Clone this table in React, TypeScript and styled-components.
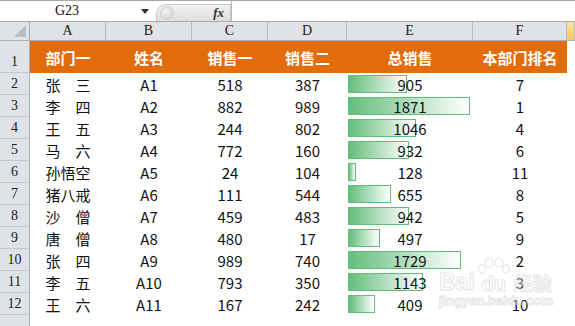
import styled, { createGlobalStyle } from 'styled-components';
import type { JSX } from 'react';

const COLS = '30px 76px 86px 76px 79px 126px 94px 1fr';
const MAX_BAR = 122;

type Rec = { name: string; id: string; s1: number; s2: number; rank: number };

const rows: Rec[] = [
  { name: '张　三', id: 'A1', s1: 518, s2: 387, rank: 7 },
  { name: '李　四', id: 'A2', s1: 882, s2: 989, rank: 1 },
  { name: '王　五', id: 'A3', s1: 244, s2: 802, rank: 4 },
  { name: '马　六', id: 'A4', s1: 772, s2: 160, rank: 6 },
  { name: '孙悟空', id: 'A5', s1: 24, s2: 104, rank: 11 },
  { name: '猪八戒', id: 'A6', s1: 111, s2: 544, rank: 8 },
  { name: '沙　僧', id: 'A7', s1: 459, s2: 483, rank: 5 },
  { name: '唐　僧', id: 'A8', s1: 480, s2: 17, rank: 9 },
  { name: '张　四', id: 'A9', s1: 989, s2: 740, rank: 2 },
  { name: '李　五', id: 'A10', s1: 793, s2: 350, rank: 3 },
  { name: '王　六', id: 'A11', s1: 167, s2: 242, rank: 10 },
];

const maxTotal = Math.max(...rows.map((r) => r.s1 + r.s2));

const GlobalStyle = createGlobalStyle`
  html, body {
    margin: 0;
    background: #fff;
    overflow: hidden;
  }
`;

const Window = styled.div`
  width: 575px;
  height: 326px;
  overflow: hidden;
  position: relative;
  display: flex;
  flex-direction: column;
  background: #fff;
`;

const TopStrip = styled.div`
  height: 3px;
  display: flex;
  border-bottom: 1px solid #a7a7a7;
`;

const StripSeg = styled.div<{ $w: number }>`
  width: ${(p): number => p.$w}px;
  border-right: 1px solid #c4c4c4;
`;

const FormulaBar = styled.div`
  height: 22px;
  display: flex;
  border-bottom: 1px solid #a9a9a9;
`;

const NameBox = styled.div`
  width: 134px;
  display: flex;
  align-items: center;
  justify-content: center;
  font-family: 'Liberation Serif', serif;
  font-size: 14px;
  color: #111;
`;

const DropArrow = styled.div`
  width: 22px;
  display: flex;
  align-items: center;
  justify-content: center;
`;

const FxGroup = styled.div`
  width: 75px;
  margin-top: 3px;
  display: flex;
  align-items: center;
  justify-content: space-between;
  padding: 0 6px 0 3px;
  box-sizing: border-box;
  border: 1px solid #c9c9c9;
  border-bottom: none;
  border-radius: 10px 0 0 0;
  background: linear-gradient(#f1f1f1, #dedede);
`;

const Knob = styled.div`
  width: 12px;
  height: 12px;
  border-radius: 50%;
  background: radial-gradient(circle at 40% 35%, #f4f4f4, #c9c9c9);
  border: 1px solid #d0d0d0;
`;

const Fx = styled.span`
  font-family: 'Liberation Serif', serif;
  font-style: italic;
  font-weight: bold;
  font-size: 13px;
  color: #333;
`;

const FormulaInput = styled.div`
  flex: 1;
  border-left: 1px solid #b9b9b9;
`;

const Gap = styled.div`
  height: 3px;
`;

const Row = styled.div<{ $h: number }>`
  display: grid;
  grid-template-columns: ${COLS};
  height: ${(p): number => p.$h}px;
  flex-shrink: 0;
`;

const Corner = styled.div`
  background: #dfe3e8;
  border-right: 1px solid #a9b0b9;
  border-bottom: 1px solid #a9b0b9;
  display: flex;
  align-items: flex-end;
  justify-content: flex-end;
  padding: 0 3px 3px 0;
`;

const ColHead = styled.div<{ $selected?: boolean }>`
  background: ${(p): string =>
    p.$selected ? 'linear-gradient(#fbe39a, #f7c95a)' : '#dfe3e8'};
  border-right: 1px solid #b5bcc5;
  border-bottom: 1px solid #a9b0b9;
  display: flex;
  align-items: center;
  justify-content: center;
  font-family: 'Liberation Serif', serif;
  font-size: 14px;
  color: #222;
`;

const RowHead = styled.div<{ $bottom?: boolean }>`
  background: #dfe3e8;
  border-right: 1px solid #a9b0b9;
  border-bottom: 1px solid #c3c8cf;
  display: flex;
  align-items: ${(p): string => (p.$bottom ? 'flex-end' : 'center')};
  padding-bottom: ${(p): string => (p.$bottom ? '2px' : '0')};
  justify-content: center;
  font-family: 'Liberation Serif', serif;
  font-size: 14px;
  color: #222;
`;

const HeadCell = styled.div`
  background: #e26b0a;
  color: #fff;
  display: flex;
  align-items: center;
  justify-content: center;
  font-family: 'Noto Sans CJK SC', sans-serif;
  font-weight: bold;
  font-size: 15px;
`;

const Cell = styled.div`
  display: flex;
  align-items: center;
  justify-content: center;
  font-family: 'Noto Sans CJK SC', sans-serif;
  font-size: 15px;
  color: #111;
  position: relative;
`;

const Bar = styled.div`
  position: absolute;
  left: 1px;
  top: 2px;
  bottom: 2px;
  box-sizing: border-box;
  border: 1px solid #63be7b;
  background: linear-gradient(to right, #63be7b, #ffffff);
`;

const CellText = styled.span`
  position: relative;
`;

const Watermark = styled.div`
  position: absolute;
  left: 439px;
  top: 256px;
  display: flex;
  flex-direction: column;
  align-items: flex-start;
  pointer-events: none;
  opacity: 0.55;
`;

const MarkLine = styled.div`
  display: flex;
  align-items: flex-end;
  height: 38px;
`;

const MarkText = styled.span<{ $size: number }>`
  font-family: 'Liberation Sans', 'Noto Sans CJK SC', sans-serif;
  font-weight: bold;
  font-size: ${(p): number => p.$size}px;
  line-height: 1;
  color: rgba(255, 255, 255, 0.7);
  -webkit-text-stroke: 1px #d2d2d2;
`;

const PawBox = styled.div`
  display: flex;
  flex-direction: column;
  align-items: center;
  margin: 0 3px 0 2px;
`;

const Paw = (): JSX.Element => (
  <svg width="34" height="17" viewBox="0 0 34 17">
    <g fill="rgba(255,255,255,0.7)" stroke="#d2d2d2" strokeWidth="1.2">
      <ellipse cx="5" cy="12" rx="3.5" ry="4.2" />
      <ellipse cx="12" cy="5.5" rx="3.8" ry="4.5" />
      <ellipse cx="22" cy="5.5" rx="3.8" ry="4.5" />
      <ellipse cx="29" cy="12" rx="3.5" ry="4.2" />
    </g>
  </svg>
);

const App = (): JSX.Element => {
  return (
    <Window>
      <GlobalStyle />
      <TopStrip>
        <StripSeg $w={106} />
        <StripSeg $w={2} />
      </TopStrip>

      <FormulaBar>
        <NameBox>G23</NameBox>
        <DropArrow>
          <svg width="8" height="5" viewBox="0 0 8 5">
            <path d="M0 0 L8 0 L4 5 Z" fill="#333" />
          </svg>
        </DropArrow>
        <FxGroup>
          <Knob />
          <Fx>fx</Fx>
        </FxGroup>
        <FormulaInput />
      </FormulaBar>

      <Gap />

      <Row $h={19}>
        <Corner>
          <svg width="12" height="12" viewBox="0 0 12 12">
            <path d="M12 0 L12 12 L0 12 Z" fill="#b9bec5" />
          </svg>
        </Corner>
        {['A', 'B', 'C', 'D', 'E', 'F'].map((c) => (
          <ColHead key={c}>{c}</ColHead>
        ))}
        <ColHead $selected />
      </Row>

      <Row $h={32}>
        <RowHead $bottom>1</RowHead>
        {['部门一', '姓名', '销售一', '销售二', '总销售', '本部门排名'].map(
          (h) => (
            <HeadCell key={h}>{h}</HeadCell>
          )
        )}
        <Cell />
      </Row>

      {rows.map((r, i) => {
        const total = r.s1 + r.s2;
        const w = Math.round((total / maxTotal) * MAX_BAR);
        return (
          <Row $h={22} key={r.id}>
            <RowHead>{i + 2}</RowHead>
            <Cell>{r.name}</Cell>
            <Cell>{r.id}</Cell>
            <Cell>{r.s1}</Cell>
            <Cell>{r.s2}</Cell>
            <Cell>
              <Bar style={{ width: w }} />
              <CellText>{total}</CellText>
            </Cell>
            <Cell>{r.rank}</Cell>
            <Cell />
          </Row>
        );
      })}

      <Row $h={22}>
        <RowHead />
      </Row>

      <Watermark>
        <MarkLine>
          <MarkText $size={23}>Bai</MarkText>
          <PawBox>
            <Paw />
            <MarkText $size={20}>du</MarkText>
          </PawBox>
          <MarkText $size={19}>经验</MarkText>
        </MarkLine>
        <MarkText $size={13}>jingyan.baidu.com</MarkText>
      </Watermark>
    </Window>
  );
};

export default App;
